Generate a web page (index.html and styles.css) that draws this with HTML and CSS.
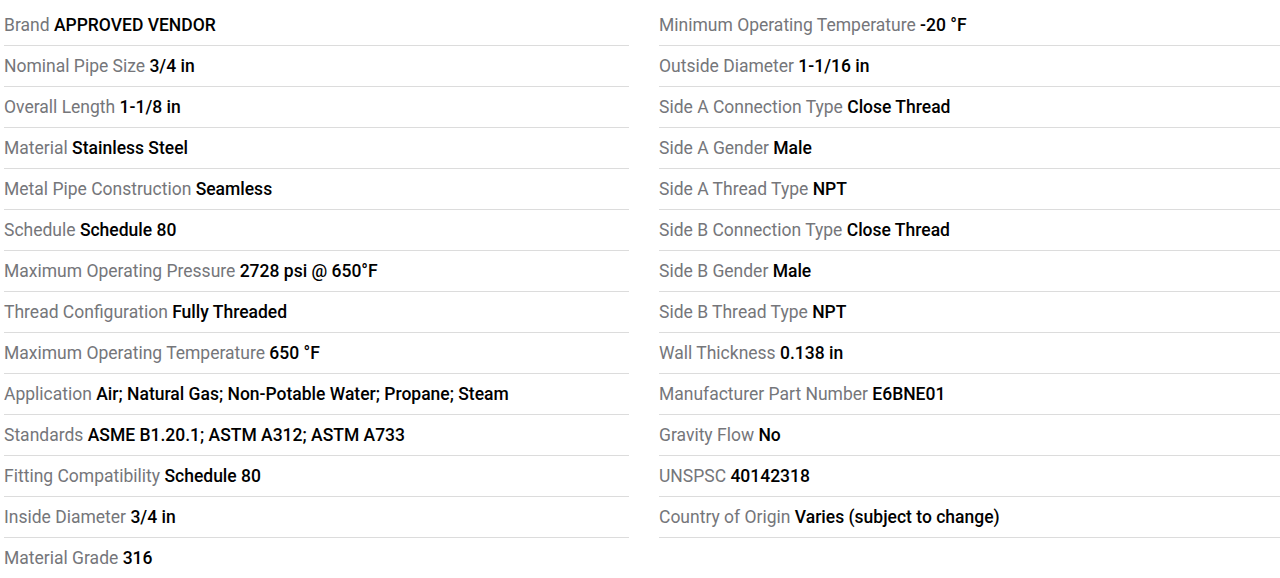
FILE: index.html
```html
<!DOCTYPE html>
<html>
<head>
<meta charset="utf-8">
<link rel="stylesheet" href="styles.css">
</head>
<body>
<div class="specs">
  <div class="col col-left">
    <div class="row"><span class="label">Brand</span> <span class="value">APPROVED VENDOR</span></div>
    <div class="row"><span class="label">Nominal Pipe Size</span> <span class="value">3/4 in</span></div>
    <div class="row"><span class="label">Overall Length</span> <span class="value">1-1/8 in</span></div>
    <div class="row"><span class="label">Material</span> <span class="value">Stainless Steel</span></div>
    <div class="row"><span class="label">Metal Pipe Construction</span> <span class="value">Seamless</span></div>
    <div class="row"><span class="label">Schedule</span> <span class="value">Schedule 80</span></div>
    <div class="row"><span class="label">Maximum Operating Pressure</span> <span class="value">2728 psi @ 650°F</span></div>
    <div class="row"><span class="label">Thread Configuration</span> <span class="value">Fully Threaded</span></div>
    <div class="row"><span class="label">Maximum Operating Temperature</span> <span class="value">650 °F</span></div>
    <div class="row"><span class="label">Application</span> <span class="value">Air; Natural Gas; Non-Potable Water; Propane; Steam</span></div>
    <div class="row"><span class="label">Standards</span> <span class="value">ASME B1.20.1; ASTM A312; ASTM A733</span></div>
    <div class="row"><span class="label">Fitting Compatibility</span> <span class="value">Schedule 80</span></div>
    <div class="row"><span class="label">Inside Diameter</span> <span class="value">3/4 in</span></div>
    <div class="row"><span class="label">Material Grade</span> <span class="value">316</span></div>
  </div>
  <div class="col col-right">
    <div class="row"><span class="label">Minimum Operating Temperature</span> <span class="value">-20 °F</span></div>
    <div class="row"><span class="label">Outside Diameter</span> <span class="value">1-1/16 in</span></div>
    <div class="row"><span class="label">Side A Connection Type</span> <span class="value">Close Thread</span></div>
    <div class="row"><span class="label">Side A Gender</span> <span class="value">Male</span></div>
    <div class="row"><span class="label">Side A Thread Type</span> <span class="value">NPT</span></div>
    <div class="row"><span class="label">Side B Connection Type</span> <span class="value">Close Thread</span></div>
    <div class="row"><span class="label">Side B Gender</span> <span class="value">Male</span></div>
    <div class="row"><span class="label">Side B Thread Type</span> <span class="value">NPT</span></div>
    <div class="row"><span class="label">Wall Thickness</span> <span class="value">0.138 in</span></div>
    <div class="row"><span class="label">Manufacturer Part Number</span> <span class="value">E6BNE01</span></div>
    <div class="row"><span class="label">Gravity Flow</span> <span class="value">No</span></div>
    <div class="row"><span class="label">UNSPSC</span> <span class="value">40142318</span></div>
    <div class="row"><span class="label">Country of Origin</span> <span class="value">Varies (subject to change)</span></div>
  </div>
</div>
</body>
</html>
```

FILE: styles.css
```css
html, body {
  margin: 0;
  padding: 0;
  background: #ffffff;
}

body {
  font-family: Roboto, "Liberation Sans", sans-serif;
  font-size: 17.5px;
}

.specs {
  display: grid;
  grid-template-columns: 625px 621px;
  column-gap: 30px;
  padding: 5px 0 0 4px;
  align-items: start;
}

.row {
  height: 40px;
  line-height: 40px;
  border-bottom: 1px solid #dcdcdc;
  white-space: nowrap;
}

.label {
  color: #75767a;
}

.value {
  color: #000000;
  font-weight: 500;
}
```
